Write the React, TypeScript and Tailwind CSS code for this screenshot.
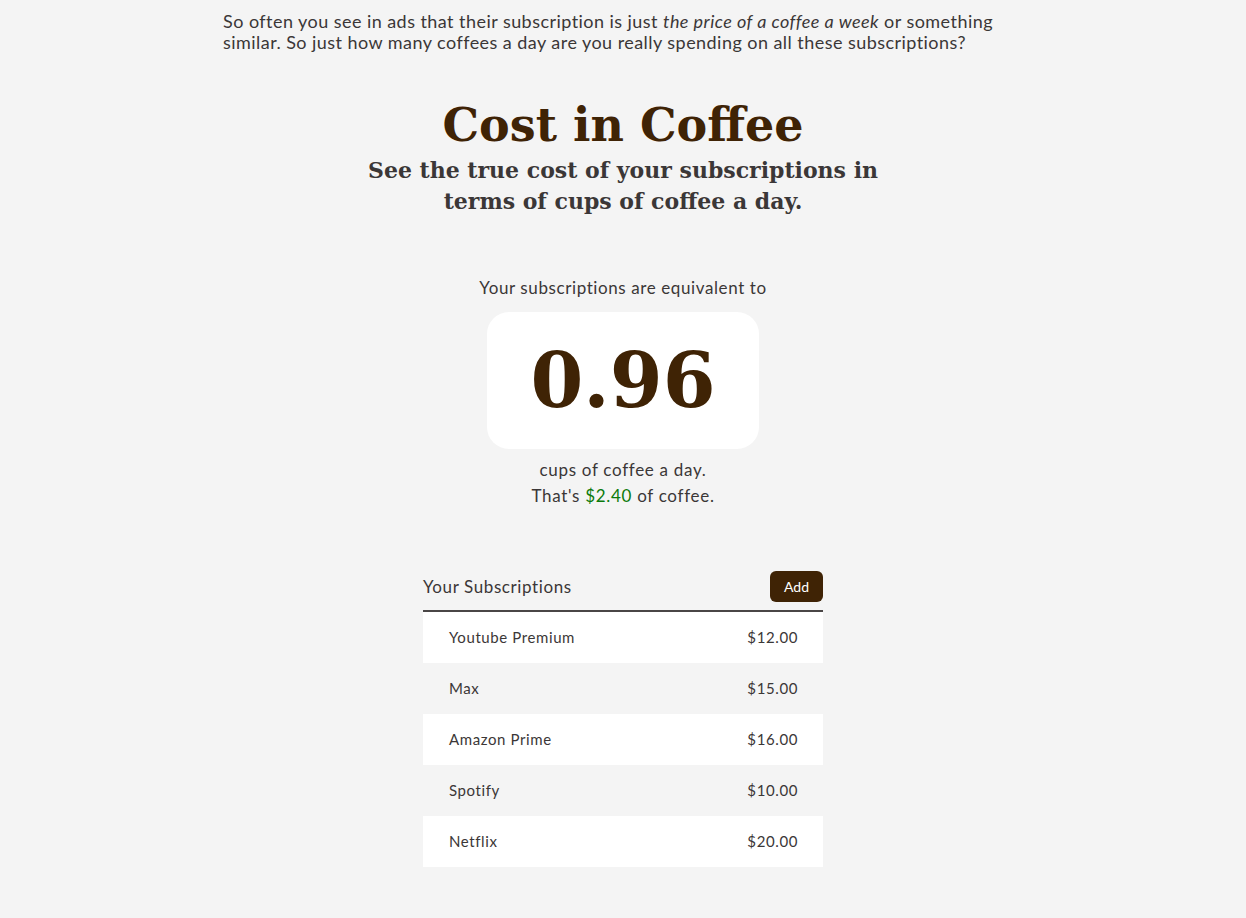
const subs = [
  { name: "Youtube Premium", price: 12 },
  { name: "Max", price: 15 },
  { name: "Amazon Prime", price: 16 },
  { name: "Spotify", price: 10 },
  { name: "Netflix", price: 20 },
];

const body = "font-['Lato','Noto_Sans',sans-serif]";
const serif = "font-['DejaVu_Serif','Liberation_Serif',serif]";

export default function App() {
  return (
    <div className={`${body} min-h-screen bg-[#f4f4f4] text-[#3b3737]`}>
      <div className="max-w-[800px] mx-auto pt-[11px] pb-[50px]">
        <p className="text-[18px] leading-[21px] tracking-[0.45px]">
          So often you see in ads that their subscription is just{" "}
          <em>the price of a coffee a week</em> or something similar. So just how many
          coffees a day are you really spending on all these subscriptions?
        </p>

        <div className="mt-[44px] flex flex-col items-center text-center">
          <h1 className={`${serif} text-[46px] leading-[56px] font-bold text-[#3f2305]`}>
            Cost in Coffee
          </h1>
          <h2 className={`${serif} mt-[2px] text-[22px] leading-[31px] font-bold text-[#3b3737] max-w-[540px]`}>
            See the true cost of your subscriptions in terms of cups of coffee a day.
          </h2>

          <p className="mt-[60px] text-[17px] leading-[22px] tracking-[0.6px]">
            Your subscriptions are equivalent to
          </p>
          <div className="mt-[13px] w-[272px] h-[137px] rounded-[22px] bg-white flex items-center justify-center">
            <span className={`${serif} text-[76px] leading-none font-bold text-[#3f2305]`}>0.96</span>
          </div>
          <p className="mt-[8px] text-[17px] leading-[26px] tracking-[0.7px]">
            cups of coffee a day.
            <br />
            That's <span className="text-[#0b7a0b]">$2.40</span> of coffee.
          </p>
        </div>

        <div className="mt-[59px] w-[400px] mx-auto">
          <div className="flex items-center justify-between h-[44px] pb-[5px] border-b-2 border-[#4a4646]">
            <span className="text-[17px] tracking-[0.6px]">Your Subscriptions</span>
            <button className="h-[31px] px-[14px] rounded-[6px] bg-[#3f2305] text-white text-[14px]">
              Add
            </button>
          </div>
          {subs.map((s, i) => (
            <div
              key={s.name}
              className={`flex items-center justify-between h-[51px] pl-[26px] pr-[25px] text-[15px] tracking-[0.6px] ${
                i % 2 === 0 ? "bg-white" : "bg-[#f4f4f4]"
              }`}
            >
              <span>{s.name}</span>
              <span>${s.price.toFixed(2)}</span>
            </div>
          ))}
        </div>
      </div>
    </div>
  );
}
